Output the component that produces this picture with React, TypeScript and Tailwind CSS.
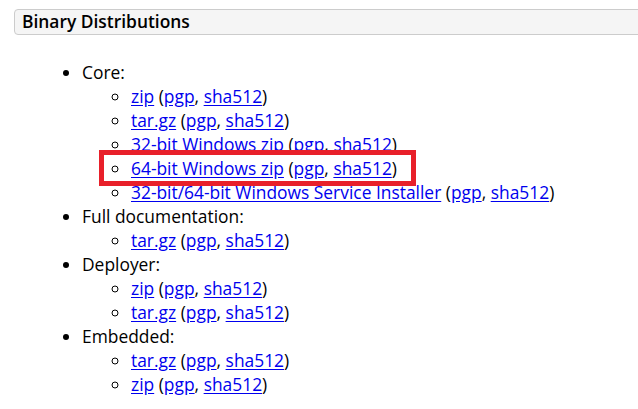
const groups = [
  {
    title: 'Core:',
    items: [
      { name: 'zip' },
      { name: 'tar.gz' },
      { name: '32-bit Windows zip' },
      { name: '64-bit Windows zip' },
      { name: '32-bit/64-bit Windows Service Installer' },
    ],
  },
  { title: 'Full documentation:', items: [{ name: 'tar.gz' }] },
  { title: 'Deployer:', items: [{ name: 'zip' }, { name: 'tar.gz' }] },
  { title: 'Embedded:', items: [{ name: 'tar.gz' }, { name: 'zip' }] },
];

const linkCls = 'text-[#0000ee] underline underline-offset-[2px]';

const App = () => {
  return (
    <div
      className="relative w-[638px] h-[409px] overflow-hidden bg-white text-black"
      style={{ fontFamily: '"Open Sans", "Liberation Sans", sans-serif' }}
    >
      {/* Section header */}
      <div className="pt-[9px] pl-[14px]">
        <h3 className="w-[700px] h-[26px] rounded-[4px] border border-[#cccccc] bg-[#f5f5f5] pl-[7px] text-[17.4px] leading-[23px] font-semibold">
          Binary Distributions
        </h3>
      </div>

      {/* Download list */}
      <ul className="mt-[25px] list-disc pl-[82px] text-[17.4px] leading-[24px]">
        {groups.map((g) => (
          <li key={g.title}>
            {g.title}
            <ul className="list-[circle] pl-[49px]">
              {g.items.map((it, i) => (
                <li key={i}>
                  <a href="#" className={linkCls}>
                    {it.name}
                  </a>{' '}
                  (<a href="#" className={linkCls}>pgp</a>,{' '}
                  <a href="#" className={linkCls}>sha512</a>)
                </li>
              ))}
            </ul>
          </li>
        ))}
      </ul>

      {/* Highlight annotation */}
      <div className="pointer-events-none absolute left-[99px] top-[150px] h-[36px] w-[317px] border-[5px] border-[#e8202a]" />
    </div>
  );
};

export default App;
